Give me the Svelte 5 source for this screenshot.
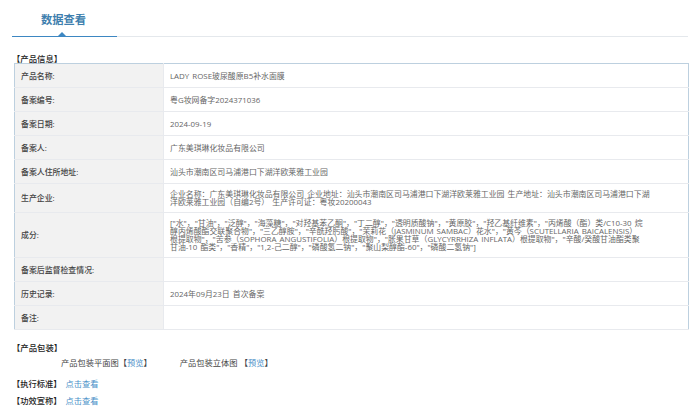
<script lang="ts">
	// fullwidth punctuation written as escapes so it survives editors
	const C = '\uFF0C';
	const S = '\uFF1A';
	const L = '\uFF08';
	const R = '\uFF09';

	const ingredients = [
		'水', '甘油', '泛醇', '海藻糖', '对羟基苯乙酮', '丁二醇', '透明质酸钠', '黄原胶', '羟乙基纤维素',
		`丙烯酸${L}酯${R}类/C10-30 烷\n醇丙烯酸酯交联聚合物`, '三乙醇胺', '辛酰羟肟酸',
		`茉莉花${L}JASMINUM SAMBAC${R}花水`, `黄芩${L}SCUTELLARIA BAICALENSIS${R}\n根提取物`,
		`苦参${L}SOPHORA ANGUSTIFOLIA${R}根提取物`, `胀果甘草${L}GLYCYRRHIZA INFLATA${R}根提取物`,
		'辛酸/癸酸甘油酯类聚\n甘油-10 酯类', '香精', '1,2-己二醇', '磷酸氢二钠', '聚山梨醇酯-60', '磷酸二氢钠'
	];

	const rows = [
		{ label: '产品名称:', value: 'LADY ROSE玻尿酸原B5补水面膜' },
		{ label: '备案编号:', value: '粤G妆网备字2024371036' },
		{ label: '备案日期:', value: '2024-09-19' },
		{ label: '备案人:', value: '广东美琪琳化妆品有限公司' },
		{ label: '备案人住所地址:', value: '汕头市潮南区司马浦港口下湖洋欧莱雅工业园' },
		{
			label: '生产企业:',
			value: `企业名称${S}广东美琪琳化妆品有限公司 企业地址${S}汕头市潮南区司马浦港口下湖洋欧莱雅工业园 生产地址${S}汕头市潮南区司马浦港口下湖洋欧莱雅工业园${L}自编2号${R} 生产许可证${S}粤妆20200043`
		},
		{
			label: '成分:',
			value: '[' + ingredients.map((i) => `"${i}"`).join(C) + ']'
		},
		{ label: '备案后监督检查情况:', value: '' },
		{ label: '历史记录:', value: '2024年09月23日 首次备案' },
		{ label: '备注:', value: '' }
	];
</script>

<div class="page">
	<div class="tabs">
		<div class="tab">数据查看</div>
	</div>

	<h4 class="section-title first">【产品信息】</h4>
	<table class="info">
		<tbody>
			{#each rows as row}
				<tr>
					<th>{row.label}</th>
					<td>{row.value}</td>
				</tr>
			{/each}
		</tbody>
	</table>

	<h4 class="section-title pack">【产品包装】</h4>
	<div class="pack-row">
		<span>产品包装平面图【<a href="#a">预览</a>】</span>
		<span>产品包装立体图 【<a href="#a">预览</a>】</span>
	</div>
	<div class="link-row first-link"><b>【执行标准】</b><a href="#a">点击查看</a></div>
	<div class="link-row"><b>【功效宣称】</b><a href="#a">点击查看</a></div>
</div>

<style>
	:global(body) {
		margin: 0;
		background: #fff;
	}

	.page {
		height: 414px;
		overflow: hidden;
		box-sizing: border-box;
		padding-left: 12px;
		font-family: 'Open Sans', 'Noto Sans CJK SC', sans-serif;
		font-size: 7.9px;
		color: #666;
	}

	.tabs {
		height: 36px;
		margin-right: 7px;
		border-bottom: 1px solid #e4e8ec;
	}

	.tab {
		position: relative;
		box-sizing: border-box;
		width: 105px;
		height: 37px;
		padding: 12px 0 0 29px;
		border-bottom: 1px solid #3d87c2;
		font-family: 'Noto Sans CJK SC', sans-serif;
		font-size: 11.25px;
		line-height: 15px;
		font-weight: 700;
		color: #3f7fae;
	}

	.tab::after {
		content: '';
		position: absolute;
		left: 46px;
		bottom: 0;
		border: 4px solid transparent;
		border-top: 0;
		border-bottom-color: #3d87c2;
	}

	.section-title {
		margin: 0;
		font-size: 8.4px;
		line-height: 9px;
		font-weight: 500;
		color: #222;
	}

	.section-title.first {
		margin-top: 17px;
	}

	.section-title.pack {
		margin-top: 13px;
	}

	.info {
		width: 675px;
		margin-left: 2px;
		border-collapse: collapse;
		table-layout: fixed;
		border: 1px solid #bdd0df;
	}

	.info th,
	.info td {
		box-sizing: border-box;
		height: 24px;
		border-bottom: 1px solid #e8eaee;
		line-height: 8px;
		padding: 6px 37px 6px 6px;
		text-align: left;
		vertical-align: middle;
		font-weight: 400;
		word-spacing: 1px;
	}

	.info td {
		white-space: pre-line;
	}

	.info th {
		width: 149px;
		padding: 6px;
		background: #f2f2f2;
		color: #444;
		font-weight: 500;
		border-right: 1px solid #e8eaee;
	}

	.pack-row {
		display: flex;
		gap: 28px;
		margin-top: 6px;
		padding-left: 49px;
		font-size: 8.25px;
		line-height: 10px;
		color: #444;
	}

	.link-row {
		margin-top: 7px;
		font-size: 8.25px;
		line-height: 10px;
		color: #222;
	}

	.first-link {
		margin-top: 11px;
	}

	.link-row b {
		font-weight: 500;
		margin-right: 4px;
	}

	a {
		color: #4a90c8;
		text-decoration: none;
	}
</style>
